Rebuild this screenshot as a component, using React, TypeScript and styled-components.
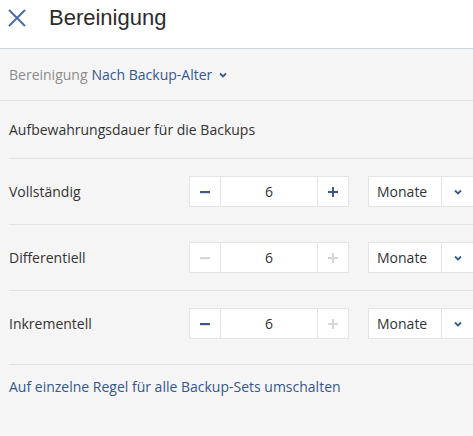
import { createGlobalStyle, styled } from 'styled-components'

const GlobalStyle = createGlobalStyle`
	html, body {
		margin: 0;
		padding: 0;
		background: #f5f5f5;
	}
	body {
		font-family: 'Open Sans', 'Liberation Sans', sans-serif;
		color: #333;
		overflow: hidden;
	}
`

const StyledPage = styled.div`
	width: 473px;
	height: 436px;
	background: #f5f5f5;
	overflow: hidden;
`
const StyledHeader = styled.header`
	height: 49px;
	background: #fff;
	border-bottom: 1px solid #c9d3de;
	display: flex;
	align-items: flex-start;
	gap: 23px;
	padding: 5px 0 0 8px;
	box-sizing: border-box;
`
const StyledClose = styled.button`
	border: 0;
	background: none;
	padding: 0;
	margin-top: 4px;
	width: 18px;
	height: 18px;
	display: flex;
	cursor: pointer;
`
const StyledTitle = styled.h1`
	margin: 0;
	font-family: 'Liberation Sans', Arial, sans-serif;
	font-weight: normal;
	font-size: 22px;
	line-height: 25px;
	color: #2b2b2b;
`
const StyledModeBar = styled.div`
	height: 51px;
	border-bottom: 1px solid #e2e2e2;
	display: flex;
	align-items: center;
	padding-left: 9px;
	font-size: 14px;
	gap: 4px;
`
const StyledMuted = styled.span`
	color: #8c8c8c;
`
const StyledDropdownLink = styled.span`
	color: #36578f;
	display: flex;
	align-items: center;
	gap: 6px;
`
const StyledContent = styled.div`
	margin-left: 9px;
`
const StyledRow = styled.div<{ $height: number; $last?: boolean }>`
	height: ${(p) => p.$height}px;
	padding-bottom: ${(p) => (p.$last ? 8 : 0)}px;
	border-bottom: 1px solid #e2e2e2;
	display: flex;
	align-items: center;
	font-size: 14px;
	white-space: nowrap;
	& > * {
		flex-shrink: 0;
	}
`
const StyledRowLabel = styled.div`
	width: 180px;
`
const StyledStepper = styled.div`
	display: flex;
	height: 31px;
	border: 1px solid #e4e4e4;
	background: #fff;
	box-sizing: border-box;
`
const StyledStepButton = styled.button<{ $disabled?: boolean }>`
	width: 30px;
	border: 0;
	background: #fff;
	padding: 0;
	display: flex;
	align-items: center;
	justify-content: center;
	color: ${(p) => (p.$disabled ? '#d6d6d6' : '#3a5a8f')};
	cursor: pointer;
`
const StyledValue = styled.div`
	width: 96px;
	border-left: 1px solid #e4e4e4;
	border-right: 1px solid #e4e4e4;
	display: flex;
	align-items: center;
	justify-content: center;
	font-size: 14px;
	color: #333;
`
const StyledSelect = styled.div`
	display: flex;
	height: 31px;
	margin-left: 19px;
	border: 1px solid #e4e4e4;
	background: #fff;
	box-sizing: border-box;
`
const StyledSelectValue = styled.div`
	width: 73px;
	padding-left: 8px;
	box-sizing: border-box;
	display: flex;
	align-items: center;
	border-right: 1px solid #e4e4e4;
	color: #333;
`
const StyledSelectArrow = styled.div`
	width: 32px;
	display: flex;
	align-items: center;
	justify-content: center;
`
const StyledFooterLink = styled.a`
	display: block;
	margin-top: 12px;
	font-size: 14px;
	color: #36578f;
	text-decoration: none;
`

function Chevron({ size = 10 }: { size?: number }) {
	return (
		<svg width={size} height={size} viewBox="0 0 10 10">
			<path d="M2 3.5 L5 6.5 L8 3.5" fill="none" stroke="#3a5a8f" strokeWidth="1.8" />
		</svg>
	)
}

function Minus() {
	return (
		<svg width="10" height="10" viewBox="0 0 10 10">
			<rect x="0" y="4" width="10" height="2.2" fill="currentColor" />
		</svg>
	)
}

function Plus() {
	return (
		<svg width="10" height="10" viewBox="0 0 10 10">
			<rect x="0" y="4" width="10" height="2" fill="currentColor" />
			<rect x="4" y="0" width="2" height="10" fill="currentColor" />
		</svg>
	)
}

interface RetentionRow {
	label: string
	value: number
	canDecrease: boolean
	canIncrease: boolean
}

const rows: RetentionRow[] = [
	{ label: 'Vollständig', value: 6, canDecrease: true, canIncrease: true },
	{ label: 'Differentiell', value: 6, canDecrease: false, canIncrease: false },
	{ label: 'Inkrementell', value: 6, canDecrease: true, canIncrease: false },
]

export default function App() {
	return (
		<StyledPage>
			<GlobalStyle />
			<StyledHeader>
				<StyledClose aria-label="Schließen">
					<svg width="18" height="18" viewBox="0 0 18 18">
						<path d="M1 1 L17 17 M17 1 L1 17" stroke="#4a6aa8" strokeWidth="2" fill="none" />
					</svg>
				</StyledClose>
				<StyledTitle>Bereinigung</StyledTitle>
			</StyledHeader>

			<StyledModeBar>
				<StyledMuted>Bereinigung</StyledMuted>
				<StyledDropdownLink>
					Nach Backup-Alter
					<Chevron />
				</StyledDropdownLink>
			</StyledModeBar>

			<StyledContent>
				<StyledRow $height={57}>Aufbewahrungsdauer für die Backups</StyledRow>
				{rows.map((row, i) => (
					<StyledRow key={row.label} $height={65} $last={i === rows.length - 1}>
						<StyledRowLabel>{row.label}</StyledRowLabel>
						<StyledStepper>
							<StyledStepButton $disabled={!row.canDecrease}>
								<Minus />
							</StyledStepButton>
							<StyledValue>{row.value}</StyledValue>
							<StyledStepButton $disabled={!row.canIncrease}>
								<Plus />
							</StyledStepButton>
						</StyledStepper>
						<StyledSelect>
							<StyledSelectValue>Monate</StyledSelectValue>
							<StyledSelectArrow>
								<Chevron />
							</StyledSelectArrow>
						</StyledSelect>
					</StyledRow>
				))}
				<StyledFooterLink href="#">Auf einzelne Regel für alle Backup-Sets umschalten</StyledFooterLink>
			</StyledContent>
		</StyledPage>
	)
}
